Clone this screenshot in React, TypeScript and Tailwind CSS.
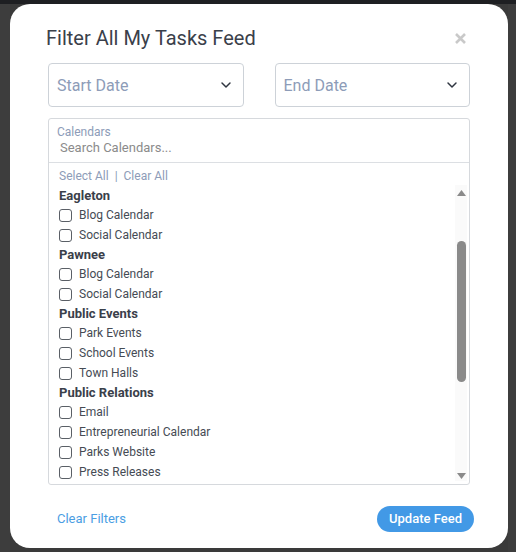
import { ChevronDown } from 'lucide-react';

const groups = [
  { name: 'Eagleton', items: ['Blog Calendar', 'Social Calendar'] },
  { name: 'Pawnee', items: ['Blog Calendar', 'Social Calendar'] },
  { name: 'Public Events', items: ['Park Events', 'School Events', 'Town Halls'] },
  {
    name: 'Public Relations',
    items: ['Email', 'Entrepreneurial Calendar', 'Parks Website', 'Press Releases'],
  },
];

const DateSelect = ({ label }: { label: string }) => (
  <div className="flex h-[44px] flex-1 items-center justify-between rounded-[4px] border border-[#cdd2d8] pl-[8px] pr-[9px]">
    <span className="mt-[2px] text-[16px] text-[#8d9cb8]">{label}</span>
    <ChevronDown className="h-[16px] w-[16px] text-[#2f3540]" strokeWidth={2.2} />
  </div>
);

const Scrollbar = () => (
  <div className="mb-[3px] mr-[2px] mt-[22px] flex w-[12px] flex-col items-center bg-[#fafafa]">
    <svg width="9" height="6" viewBox="0 0 9 6" className="mt-[5px]">
      <path d="M4.5 0 L9 6 L0 6 Z" fill="#8a8a8a" />
    </svg>
    <div className="mt-[45px] h-[141px] w-[9px] rounded-full bg-[#8a8a8a]" />
    <div className="flex-1" />
    <svg width="9" height="6" viewBox="0 0 9 6" className="mb-[2px]">
      <path d="M0 0 L9 0 L4.5 6 Z" fill="#8a8a8a" />
    </svg>
  </div>
);

export default function App() {
  return (
    <div className="flex h-[552px] w-[516px] flex-col overflow-hidden bg-[#2a2a2b] font-['Roboto',sans-serif]">
      <div className="h-[4px] bg-[#1e1f22]" />
      <div className="flex flex-1 bg-[#3a3a3a]">
        <div className="w-[10px] bg-[#3d3d3d]" />
        <div className="flex h-[544px] w-[498px] flex-col rounded-[20px] bg-white px-[38px] pt-[22px]">
          {/* Header */}
          <div className="flex h-[24px] items-center justify-between">
            <h2 className="-ml-[2px] text-[20px] text-[#3a404a]">Filter All My Tasks Feed</h2>
            <svg width="11" height="11" viewBox="0 0 11 11" className="mr-[4px]">
              <path d="M1 1 L10 10 M10 1 L1 10" stroke="#c9c9c9" strokeWidth="2.6" />
            </svg>
          </div>

          {/* Dates */}
          <div className="mt-[13px] flex gap-[31px]">
            <DateSelect label="Start Date" />
            <DateSelect label="End Date" />
          </div>

          {/* Calendars */}
          <div className="mt-[11px] flex h-[367px] flex-col overflow-hidden rounded-[3px] border border-[#d6d9dd]">
            <div className="flex h-[44px] flex-col border-b border-[#dcdfe3] pl-[8px] pt-[6px]">
              <span className="text-[12px] leading-[14px] text-[#8d9cb8]">Calendars</span>
              <span className="mt-[1px] pl-[3px] text-[13px] leading-[16px] text-[#8b8b8b]">
                Search Calendars...
              </span>
            </div>
            <div className="flex min-h-0 flex-1">
              <div className="flex-1 overflow-hidden pl-[10px] pt-[3px]">
                <div className="flex h-[20px] items-center text-[12px] text-[#8d9cb8]">
                  Select All<span className="mx-[6px]">|</span>Clear All
                </div>
                {groups.map((g) => (
                  <div key={g.name}>
                    <div className="flex h-[19px] items-center text-[13px] font-bold text-[#3a404a]">
                      {g.name}
                    </div>
                    {g.items.map((it) => (
                      <div key={it} className="flex h-[20px] items-center text-[12px] text-[#454b54]">
                        <span className="mr-[7px] h-[13px] w-[13px] rounded-[3px] border border-[#5a5f66]" />
                        {it}
                      </div>
                    ))}
                  </div>
                ))}
              </div>
              <Scrollbar />
            </div>
          </div>

          {/* Footer */}
          <div className="mt-[21px] flex items-center justify-between pl-[9px]">
            <button className="text-[13px] text-[#4b9ee3]">Clear Filters</button>
            <button className="-mr-[4px] h-[26px] rounded-full bg-[#4299e6] px-[12px] text-[13px] font-medium text-white">
              Update Feed
            </button>
          </div>
        </div>
        <div className="flex-1 bg-[#3d3d3d]" />
      </div>
    </div>
  );
}
